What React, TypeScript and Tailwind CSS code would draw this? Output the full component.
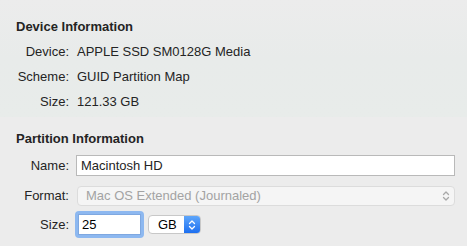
import React from 'react';

const font = { fontFamily: '"Liberation Sans", Arial, sans-serif' };

function InfoRow({ label, value }: { label: string; value: string }) {
  return (
    <div className="flex items-center h-[25px]">
      <div className="w-[69px] text-right">{label}</div>
      <div className="ml-[8px]">{value}</div>
    </div>
  );
}

function Chevrons({ color }: { color: string }) {
  return (
    <svg width="8" height="12" viewBox="0 0 8 12" fill="none" stroke={color} strokeWidth="1.3" strokeLinecap="round" strokeLinejoin="round">
      <path d="M1.5 4.5 L4 2 L6.5 4.5" />
      <path d="M1.5 7.5 L4 10 L6.5 7.5" />
    </svg>
  );
}

export default function App() {
  return (
    <div className="w-[467px] h-[246px] overflow-hidden bg-[#ececec] text-[13px] text-[#242424]" style={font}>
      {/* device section */}
      <div className="h-[117px] pt-[18px] bg-gradient-to-b from-[#ececec] via-[#e8ebea] to-[#e8ecea]">
        <div className="pl-[16px] h-[18px] leading-[18px] font-bold">Device Information</div>
        <div className="mt-[3px]">
          <InfoRow label="Device:" value="APPLE SSD SM0128G Media" />
          <InfoRow label="Scheme:" value="GUID Partition Map" />
          <InfoRow label="Size:" value="121.33 GB" />
        </div>
      </div>

      {/* partition section */}
      <div className="pt-[13px]">
        <div className="pl-[16px] h-[18px] leading-[18px] font-bold">Partition Information</div>

        <div className="flex items-center mt-[7px] h-[21px]">
          <div className="w-[69px] text-right">Name:</div>
          <div className="ml-[7px] w-[379px] h-[21px] bg-white border border-[#b9b9b9] flex items-center pl-[4px]">
            Macintosh HD
          </div>
        </div>

        <div className="flex items-center mt-[10px] h-[20px]">
          <div className="w-[69px] text-right">Format:</div>
          <div className="ml-[8px] w-[378px] h-[20px] bg-[#f5f5f5] border border-[#dcdcdc] rounded-[4px] flex items-center justify-between pl-[8px] pr-[4px] text-[#a3a3a3]">
            <span>Mac OS Extended (Journaled)</span>
            <Chevrons color="#a8a8a8" />
          </div>
        </div>

        <div className="flex items-center mt-[5px] h-[27px]">
          <div className="w-[69px] text-right">Size:</div>
          <div className="ml-[6px] w-[69px] h-[27px] rounded-[4px] bg-[#8db8f0] p-[3px]">
            <div className="w-full h-full bg-white border border-[#7fa8e0] flex items-center pl-[3px] text-black">25</div>
          </div>
          <div className="ml-[4px] w-[53px] h-[19px] rounded-[4px] bg-white border border-[#c8c8c8] flex items-stretch overflow-hidden">
            <div className="flex-1 flex items-center pl-[9px] text-black">GB</div>
            <div className="w-[16px] bg-gradient-to-b from-[#5ea6fb] to-[#1c6ff0] flex items-center justify-center">
              <Chevrons color="#ffffff" />
            </div>
          </div>
        </div>
      </div>
    </div>
  );
}
